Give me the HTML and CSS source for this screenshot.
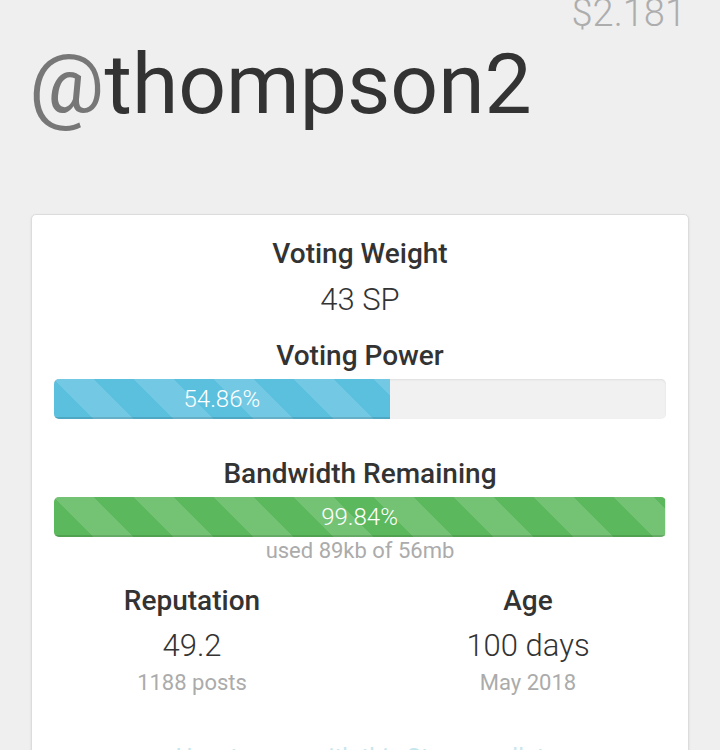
FILE: index.html
```html
<!DOCTYPE html>
<html>
<head>
<meta charset="utf-8">
<link rel="stylesheet" href="styles.css">
</head>
<body>
<div class="page">
  <div class="balance">$2.181</div>
  <h1 class="username"><span class="at">@</span>thompson2</h1>
  <div class="card">
    <div class="label">Voting Weight</div>
    <div class="value v-weight">43 SP</div>
    <div class="label l-power">Voting Power</div>
    <div class="bar">
      <div class="fill fill-info" style="width: 54.86%">54.86%</div>
    </div>
    <div class="label l-band">Bandwidth Remaining</div>
    <div class="bar">
      <div class="fill fill-success" style="width: 99.84%">99.84%</div>
    </div>
    <div class="note note-band">used 89kb of 56mb</div>
    <div class="stats">
      <div class="stat">
        <div class="label">Reputation</div>
        <div class="value v-stat">49.2</div>
        <div class="note note-stat">1188 posts</div>
      </div>
      <div class="stat">
        <div class="label">Age</div>
        <div class="value v-stat">100 days</div>
        <div class="note note-stat">May 2018</div>
      </div>
    </div>
    <div class="more">How to earn with this Steem wallet</div>
  </div>
</div>
</body>
</html>
```

FILE: styles.css
```css
html, body {
  margin: 0;
  padding: 0;
  background: #efefef;
  font-family: Roboto, "Noto Sans", sans-serif;
  overflow: hidden;
}

.page {
  padding: 0 31px;
}

.balance {
  margin-top: -7px;
  text-align: right;
  padding-right: 3px;
  font-size: 38px;
  line-height: 40px;
  font-weight: 300;
  color: #adadad;
}

.username {
  margin: 10px 0 0 -2px;
  font-size: 84px;
  line-height: 84px;
  font-weight: 400;
  color: #333;
}

.at {
  color: #777;
}

.card {
  margin-top: 87px;
  background: #fff;
  border: 1px solid #dcdcdc;
  border-radius: 5px;
  box-shadow: 0 1px 3px rgba(0, 0, 0, 0.08);
  padding: 23px 22px 40px;
  text-align: center;
}

.label {
  font-size: 28px;
  line-height: 32px;
  font-weight: 500;
  color: #333;
}

.value {
  font-size: 31px;
  line-height: 36px;
  font-weight: 300;
  color: #333;
}

.v-weight { margin-top: 12px; }
.l-power { margin-top: 22px; }
.l-band { margin-top: 39px; }

.bar {
  margin-top: 7px;
  height: 40px;
  background: #f1f1f1;
  border-radius: 5px;
  box-shadow: inset 0 1px 2px rgba(0, 0, 0, 0.08);
  overflow: hidden;
}

.fill {
  height: 100%;
  font-size: 24px;
  line-height: 40px;
  font-weight: 300;
  color: #fff;
  text-align: center;
  background-image: linear-gradient(45deg, rgba(255,255,255,.15) 25%, transparent 25%, transparent 50%, rgba(255,255,255,.15) 50%, rgba(255,255,255,.15) 75%, transparent 75%, transparent);
  background-size: 80px 80px;
  box-shadow: inset 0 -2px 0 rgba(0, 0, 0, 0.12);
}

.fill-info { background-color: #5bc0de; }
.fill-success { background-color: #5cb85c; }

.note {
  font-size: 22px;
  line-height: 24px;
  color: #ababab;
}

.note-band { margin-top: 2px; }

.stats {
  display: grid;
  grid-template-columns: 1fr 1fr;
  margin: 22px -30px 0;
}

.v-stat { margin-top: 11px; }
.note-stat { margin-top: 7px; }

.more {
  margin-top: 47px;
  font-size: 24px;
  line-height: 30px;
  color: #c8e6ee;
}
```
